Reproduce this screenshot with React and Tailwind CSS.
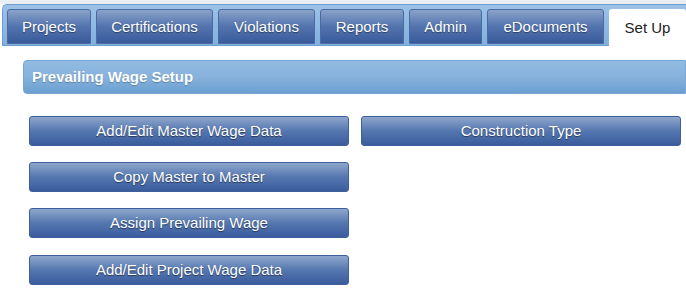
export default function App() {
  const tabs = [
    { label: "Projects", w: "w-[84px]" },
    { label: "Certifications", w: "w-[117px]" },
    { label: "Violations", w: "w-[97px]" },
    { label: "Reports", w: "w-[84px]" },
    { label: "Admin", w: "w-[73px]" },
    { label: "eDocuments", w: "w-[117px]" },
  ];
  const btn =
    "h-[30px] w-[320px] rounded-[3px] bg-gradient-to-b from-[#8ea6cb] via-[#5577b0] to-[#3a5c9c] border border-[#3d5f9c] text-white text-[15px] flex items-center justify-center [text-shadow:0_1px_1px_rgba(0,0,0,0.5)]";
  return (
    <div className="w-[686px] h-[301px] bg-white overflow-hidden" style={{ fontFamily: '"Liberation Sans", Arial, sans-serif' }}>
      <div className="h-[4px] bg-[#eaeff5]" />
      <div className="ml-[2px] h-[42px] rounded-tl-[5px] bg-gradient-to-b from-[#9cc2e6] to-[#82b0dc] border-l border-t border-b border-[#6f9fd0] flex items-end gap-[5px] pl-[4px]">
        {tabs.map((t) => (
          <div
            key={t.label}
            className={`${t.w} h-[35px] mb-[1px] pt-[2px] rounded-t-[3px] bg-gradient-to-b from-[#8aa3c9] via-[#5273ad] to-[#3a5b9b] border border-[#4a6aa6] text-white text-[15px] flex items-center justify-center [text-shadow:0_1px_1px_rgba(0,0,0,0.4)]`}
          >
            {t.label}
          </div>
        ))}
        <div className="w-[77px] h-[37px] pt-[2px] rounded-t-[3px] bg-white text-[#222] text-[15px] flex items-center justify-center -mb-[1px]">
          Set Up
        </div>
      </div>
      <div className="mt-[14px] ml-[23px] h-[34px] rounded-l-[4px] bg-gradient-to-b from-[#93bbe2] via-[#86b2dc] to-[#6b9fd1] border border-[#79a7d6] flex items-center pl-[8px] text-white font-bold text-[15px] [text-shadow:0_1px_1px_rgba(0,0,0,0.25)]">
        Prevailing Wage Setup
      </div>
      <div className="mt-[22px] ml-[29px] flex gap-[12px]">
        <div className="flex flex-col gap-[16px]">
          <div className={btn}>Add/Edit Master Wage Data</div>
          <div className={btn}>Copy Master to Master</div>
          <div className={btn}>Assign Prevailing Wage</div>
          <div className={`${btn} mt-[1px]`}>Add/Edit Project Wage Data</div>
        </div>
        <div>
          <div className={btn}>Construction Type</div>
        </div>
      </div>
    </div>
  );
}
